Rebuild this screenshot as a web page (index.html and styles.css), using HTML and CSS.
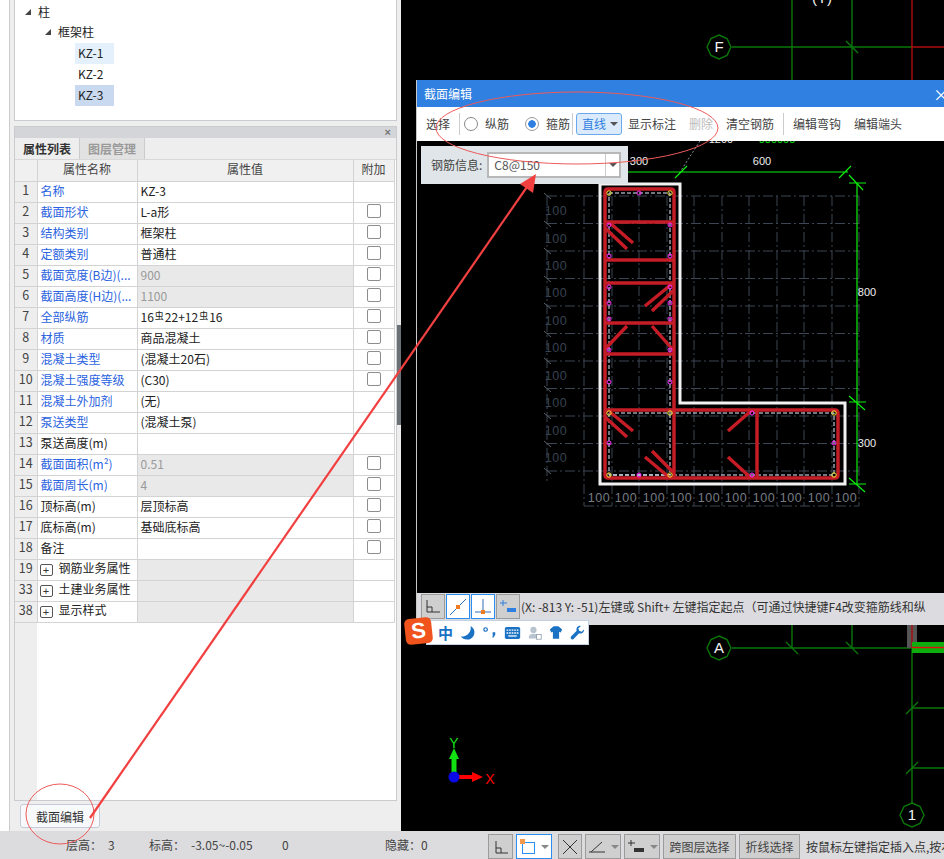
FILE: index.html
```html
<!DOCTYPE html>
<html lang="zh-CN">
<head>
<meta charset="utf-8">
<title>截面编辑</title>
<link rel="stylesheet" href="styles.css">
</head>
<body>
<div class="app">
  <div class="main">
    <aside class="side">
      <div class="tree">
        <div class="node lv1"><span class="tri"></span>柱</div>
        <div class="node lv2"><span class="tri"></span>框架柱</div>
        <div class="node lv3"><span class="leaf hover">KZ-1</span></div>
        <div class="node lv3"><span class="leaf">KZ-2</span></div>
        <div class="node lv3"><span class="leaf sel">KZ-3</span></div>
      </div>
      <section class="props">
        <div class="props-head"><span class="close">×</span></div>
        <div class="tabs"><span class="tab on">属性列表</span><span class="tab">图层管理</span></div>
        <div class="grid-wrap">
          <table class="grid">
            <colgroup><col class="c0"><col class="c1"><col class="c2"><col class="c3"></colgroup>
            <tr class="hd"><th></th><th>属性名称</th><th>属性值</th><th>附加</th></tr>
            <tr><td class="n">1</td><td class="b">名称</td><td>KZ-3</td><td></td></tr>
            <tr><td class="n">2</td><td class="b">截面形状</td><td>L-a形</td><td class="k"><i></i></td></tr>
            <tr><td class="n">3</td><td class="b">结构类别</td><td>框架柱</td><td class="k"><i></i></td></tr>
            <tr><td class="n">4</td><td class="b">定额类别</td><td>普通柱</td><td class="k"><i></i></td></tr>
            <tr><td class="n">5</td><td class="b">截面宽度(B边)(...</td><td class="g">900</td><td class="k"><i></i></td></tr>
            <tr><td class="n">6</td><td class="b">截面高度(H边)(...</td><td class="g">1100</td><td class="k"><i></i></td></tr>
            <tr><td class="n">7</td><td class="b">全部纵筋</td><td>16<sup>虫</sup>22+12<sup>虫</sup>16</td><td class="k"><i></i></td></tr>
            <tr><td class="n">8</td><td class="b">材质</td><td>商品混凝土</td><td class="k"><i></i></td></tr>
            <tr><td class="n">9</td><td class="b">混凝土类型</td><td>(混凝土20石)</td><td class="k"><i></i></td></tr>
            <tr><td class="n">10</td><td class="b">混凝土强度等级</td><td>(C30)</td><td class="k"><i></i></td></tr>
            <tr><td class="n">11</td><td class="b">混凝土外加剂</td><td>(无)</td><td></td></tr>
            <tr><td class="n">12</td><td class="b">泵送类型</td><td>(混凝土泵)</td><td></td></tr>
            <tr><td class="n">13</td><td>泵送高度(m)</td><td></td><td></td></tr>
            <tr><td class="n">14</td><td class="b">截面面积(m²)</td><td class="g">0.51</td><td class="k"><i></i></td></tr>
            <tr><td class="n">15</td><td class="b">截面周长(m)</td><td class="g">4</td><td class="k"><i></i></td></tr>
            <tr><td class="n">16</td><td>顶标高(m)</td><td>层顶标高</td><td class="k"><i></i></td></tr>
            <tr><td class="n">17</td><td>底标高(m)</td><td>基础底标高</td><td class="k"><i></i></td></tr>
            <tr><td class="n">18</td><td>备注</td><td></td><td class="k"><i></i></td></tr>
            <tr><td class="n">19</td><td><b class="plus">+</b>钢筋业务属性</td><td class="g"></td><td></td></tr>
            <tr><td class="n">33</td><td><b class="plus">+</b>土建业务属性</td><td class="g"></td><td></td></tr>
            <tr><td class="n">38</td><td><b class="plus">+</b>显示样式</td><td class="g"></td><td></td></tr>
          </table>
          <div class="gutter"></div>
        </div>
      </section>
      <div class="side-foot"><button class="edit-btn">截面编辑</button></div>
      <div class="splitter"></div>
    </aside>
    <div class="canvas">
      <svg class="cad-bg" viewBox="401 0 543 831" width="543" height="831">
        <g stroke="#0a760a" stroke-width="1.4" fill="none">
          <path d="M792 0V80M852 0V80M732 47H912"/>
          <path d="M846 41L858 53"/>
          <path d="M792 622V648M852 622V648M732 648H912M912 648V803M912 708H944M912 768H944"/>
          <path d="M786 642L798 654M846 642L858 654M906 714L918 702M906 774L918 762"/>
          <polygon points="719,35 727,38.500 731,47 727,55.500 719,59 711,55.500 707,47 711,38.500"/>
          <polygon points="719,636 727,639.500 731,648 727,656.500 719,660 711,656.500 707,648 711,639.500"/>
          <polygon points="912,803 920,806.500 924,815 920,823.500 912,827 904,823.500 900,815 904,806.500"/>
        </g>
        <path d="M912 0V80M912 47H944" stroke="#b00c0c" stroke-width="1.400" fill="none"/>
        <rect x="907" y="622" width="10" height="26" fill="#555"/>
        <path d="M912 622V648" stroke="#b00c0c" stroke-width="1.400"/>
        <rect x="912" y="642" width="32" height="11" fill="#0fae0f"/>
        <path d="M912 647.500H944" stroke="#e01010" stroke-width="1.400"/>
        <g class="cad-label">
          <text x="719" y="52">F</text>
          <text x="719" y="653">A</text>
          <text x="912" y="820">1</text>
          <text x="822" y="3">(Y)</text>
        </g>
        <path d="M454 777V758" stroke="#12e012" stroke-width="5"/>
        <path d="M454 748L449 759H459Z" fill="#12e012"/>
        <path d="M454 777H473" stroke="#f00" stroke-width="4"/>
        <path d="M483 777L472 772V782Z" fill="#f00"/>
        <circle cx="454" cy="777" r="5.500" fill="#0a0ae8"/>
        <text class="ax-y" x="454" y="748">Y</text>
        <text class="ax-x" x="490" y="784">X</text>
      </svg>
    </div>
  </div>
  <footer class="status">
    <span class="st st1">层高：&ensp;3</span>
    <span class="st st2">标高：&ensp;-3.05~-0.05</span>
    <span class="st st3">0</span>
    <span class="st st4">隐藏：0</span>
    <div class="st-tools">
      <span class="tb w26"><svg width="16" height="16" viewBox="0 0 16 16"><path d="M3 2V14H15M3 9H8V14" fill="none" stroke="#333"/></svg></span>
      <span class="tb w36 act"><svg width="16" height="16" viewBox="0 0 16 16"><rect x="2.500" y="3.500" width="12" height="11" fill="none" stroke="#2a8df0"/><rect x="0" y="0" width="5" height="5" fill="#f39a4c"/></svg><u class="caret"></u></span>
      <span class="tb w25 gap3"><svg width="18" height="18" viewBox="0 0 18 18"><path d="M2 2L16 16M16 2L2 16" stroke="#333" fill="none"/></svg></span>
      <span class="tb w36"><svg width="18" height="16" viewBox="0 0 18 16"><path d="M1 13H17M3 13L14 3" stroke="#333" fill="none"/></svg><u class="caret"></u></span>
      <span class="tb w36"><svg width="18" height="16" viewBox="0 0 18 16"><path d="M1 4H8M4 1V7" stroke="#333" fill="none"/><rect x="7" y="9" width="10" height="4" fill="#333"/></svg><u class="caret"></u></span>
      <span class="tb txt w73">跨图层选择</span>
      <span class="tb txt w61">折线选择</span>
      <span class="hint">按鼠标左键指定插入点,按右键</span>
    </div>
  </footer>

  <div class="dialog">
    <div class="dlg-title"><span>截面编辑</span><span class="dlg-x">×</span></div>
    <div class="dlg-tools">
      <span class="ti w1">选择</span><span class="sep"></span>
      <span class="radio"></span><span class="rl r1">纵筋</span>
      <span class="radio on"></span><span class="rl">箍筋</span><span class="sep"></span>
      <span class="line-btn">直线<u class="caret dark"></u></span>
      <span class="ti w2">显示标注</span>
      <span class="ti w3 off">删除</span>
      <span class="ti w4">清空钢筋</span><span class="sep s3"></span>
      <span class="ti w5">编辑弯钩</span>
      <span class="ti w5">编辑端头</span>
    </div>
    <div class="dlg-canvas">
      <svg class="cad" viewBox="416 141 528 452" width="528" height="452">
        <path class="grid-d" d="M584 196V506M612 196V506M639 196V506M667 196V506M694 196V506M722 196V506M749 196V506M777 196V506M804 196V506M832 196V506M859 196V506M547 196V484M547 196H859M547 223.500H859M547 251H859M547 278.500H859M547 306H859M547 333.500H859M547 361H859M547 388.500H859M547 416H859M547 443.500H859M547 471H859M584 506H859"/>
        <path class="grid-t" d="M544 193L551 199M544 221L551 227M544 248L551 254M544 276L551 282M544 303L551 309M544 331L551 337M544 358L551 364M544 386L551 392M544 413L551 419M544 441L551 447M544 468L551 474"/>
        <g class="dim-l">
          <text x="556" y="215">100</text><text x="556" y="243">100</text><text x="556" y="270">100</text><text x="556" y="297">100</text><text x="556" y="325">100</text><text x="556" y="352">100</text><text x="556" y="380">100</text><text x="556" y="407">100</text><text x="556" y="435">100</text><text x="556" y="462">100</text>
        </g>
        <g class="dim-b">
          <text x="599" y="502">100</text><text x="626" y="502">100</text><text x="654" y="502">100</text><text x="681" y="502">100</text><text x="709" y="502">100</text><text x="736" y="502">100</text><text x="764" y="502">100</text><text x="791" y="502">100</text><text x="819" y="502">100</text><text x="846" y="502">100</text>
        </g>
        <path d="M700 141L680 172" stroke="#8a8f98" stroke-dasharray="2 2" fill="none"/>
        <path d="M628 172H848M675 178L687 166M839 178L851 166M857 183V484M849 175L863 190M849 183H866M849 396L865 410M849 402H866M849 478L865 492M849 484H866" stroke="#0cf00c" stroke-width="1.200" fill="none"/>
        <path d="M600 184H680V403H845V484H600Z" fill="none" stroke="#f2f2f2" stroke-width="3"/>
        <path d="M609 193H670V475H609ZM609 413H834V475H609" fill="none" stroke="#e2ecff" stroke-dasharray="4 2"/>
        <g fill="none" stroke="#c61c26" stroke-width="3.400">
          <path d="M608 189H671Q674 189 674 192V410H835Q838 410 838 413V475Q838 478 835 478H608Q605 478 605 475V192Q605 189 608 189Z"/>
          <path d="M605 222H674M605 260H674M605 283H674M605 323H674M605 354H674M605 410H674M674 410V478M757 410V478"/>
          <path d="M610 223L633 243M605 228L627 249M673 283L645 306M674 290L652 311M627 326L605 349M652 326L674 351M610 412L633 431M605 417L627 437M652 451L674 473M645 457L670 478M752 410L728 431M728 457L750 477"/>
        </g>
        <g fill="none" stroke="#f5e63a">
          <circle cx="609" cy="193" r="2.200"/><circle cx="670" cy="193" r="2.200"/><circle cx="609" cy="413" r="2.200"/><circle cx="670" cy="413" r="2.200"/><circle cx="834" cy="413" r="2.200"/><circle cx="609" cy="475" r="2.200"/><circle cx="670" cy="475" r="2.200"/><circle cx="834" cy="475" r="2.200"/>
        </g>
        <g fill="none" stroke="#ff2cff">
          <circle cx="639" cy="193" r="2"/><circle cx="609" cy="225" r="2"/><circle cx="670" cy="225" r="2"/><circle cx="609" cy="256" r="2"/><circle cx="670" cy="256" r="2"/><circle cx="609" cy="287" r="2"/><circle cx="670" cy="287" r="2"/><circle cx="609" cy="303" r="2"/><circle cx="670" cy="303" r="2"/><circle cx="609" cy="319" r="2"/><circle cx="670" cy="319" r="2"/><circle cx="609" cy="350" r="2"/><circle cx="670" cy="350" r="2"/><circle cx="609" cy="382" r="2"/><circle cx="670" cy="382" r="2"/><circle cx="609" cy="443" r="2"/><circle cx="639" cy="475" r="2"/><circle cx="752" cy="413" r="2"/><circle cx="752" cy="475" r="2"/><circle cx="834" cy="443" r="2"/>
        </g>
        <g class="dim-w">
          <text x="639" y="165">300</text><text x="762" y="165">600</text><text x="867" y="296">800</text><text x="867" y="447">300</text><text x="721" y="143">1200</text>
        </g>
        <text class="dim-g" x="777" y="143">000000</text>
      </svg>
      <div class="rebar-info">
        <span>钢筋信息:</span>
        <div class="combo"><span class="combo-val">C8@150</span><span class="combo-arrow"><u class="caret dark"></u></span></div>
      </div>
    </div>
    <div class="dlg-status">
      <span class="sb"><svg width="18" height="16" viewBox="0 0 18 16"><path d="M3 1V13H16M3 8H8V13" fill="none" stroke="#333"/></svg></span>
      <span class="sb act"><svg width="20" height="20" viewBox="0 0 20 20"><path d="M2 18L18 2" stroke="#2f6fb5"/><rect x="8" y="8" width="4" height="4" fill="#f07b22"/></svg></span>
      <span class="sb act"><svg width="20" height="20" viewBox="0 0 20 20"><path d="M2 15H18M10 2V15" stroke="#2f6fb5"/><rect x="8" y="13" width="4" height="4" fill="#f07b22"/></svg></span>
      <span class="sb"><svg width="18" height="16" viewBox="0 0 18 16"><path d="M1 4H8M4 1V7" stroke="#2f80e0" fill="none"/><rect x="8" y="9" width="9" height="4" fill="#2f80e0"/></svg></span>
      <span class="sb-text">(X: -813 Y: -51)左键或 Shift+ 左键指定起点（可通过快捷键F4改变箍筋线和纵</span>
    </div>
  </div>

  <div class="ime">
    <span class="ime-logo">S</span>
    <span class="ime-zh">中</span>
    <svg width="16" height="16" viewBox="0 0 18 18"><path d="M12 1C13 7 9 13 1 13C4 18 14 18 16 10C17 6 15 3 12 1Z" fill="#1a72c4"/></svg>
    <svg width="14" height="16" viewBox="0 0 16 18"><circle cx="3" cy="5" r="2" fill="none" stroke="#1a72c4" stroke-width="1.400"/><path d="M11 8H14V11L12 14H10.500L11.500 11H11Z" fill="#1a72c4"/></svg>
    <svg width="17" height="14" viewBox="0 0 20 16"><rect x="1" y="1" width="18" height="14" rx="2" fill="#1a72c4"/><path d="M3 4.500H17M3 8H17" stroke="#fff" stroke-width="1.500" stroke-dasharray="2 1"/><path d="M5 11.500H15" stroke="#fff" stroke-width="1.500"/></svg>
    <svg width="14" height="16" viewBox="0 0 18 18"><circle cx="7" cy="5" r="4" fill="#b7c3cf"/><path d="M1 16C1 11 4 10 7 10C10 10 13 11 13 16Z" fill="#b7c3cf"/><rect x="11" y="11" width="6" height="6" fill="#fff" stroke="#8b99a6"/></svg>
    <svg width="14" height="15" viewBox="0 0 18 18"><path d="M6 1H12L17 5L15 9L13 8V17H5V8L3 9L1 5Z" fill="#1a72c4"/></svg>
    <svg width="15" height="15" viewBox="0 0 18 18"><path d="M12 1C9 1 7 4 8 7L1 14C0 16 2 18 4 17L11 10C14 11 17 9 17 5L14 8L11 7L10 4L13 1.500Z" fill="#1a72c4"/></svg>
  </div>

  <svg class="notes" viewBox="0 0 944 859" width="944" height="859">
    <ellipse cx="577" cy="128" rx="141" ry="36" fill="none" stroke="#ee5a5a"/>
    <ellipse cx="60" cy="814" rx="34" ry="30" fill="none" stroke="#ee5a5a"/>
    <path d="M90 818L529 184" stroke="#f24040" stroke-width="2.200" fill="none"/>
    <path d="M536 174L520 184L533 193Z" fill="#f24040"/>
  </svg>
</div>
</body>
</html>
```

FILE: styles.css
```css
* { box-sizing: border-box; }
html, body { margin: 0; padding: 0; }
body { width: 944px; height: 859px; overflow: hidden; background: #000; font: 12px/1 "Noto Sans CJK SC", "Noto Sans", sans-serif; color: #222; }
u { text-decoration: none; }

.app { position: relative; width: 944px; height: 859px; display: flex; flex-direction: column; overflow: hidden; }
.main { flex: 1; display: flex; min-height: 0; }

.side { position: relative; width: 401px; background: #eee; border-left: 9px solid #fff; padding-left: 5px; padding-right: 4px; display: flex; flex-direction: column; box-shadow: inset 1px 0 0 #ccc; }
.tree { height: 122px; background: #fff; border: 1px solid #c9cbce; margin-top: -1px; padding-top: 2px; flex: none; }
.node { height: 21px; display: flex; align-items: center; }
.lv1 { padding-left: 10px; height: 20px; }
.lv2 { padding-left: 30px; padding-bottom: 2px; }
.lv3 { padding-left: 60px; }
.tri { width: 0; height: 0; border-style: solid; border-width: 0 0 6px 6px; border-color: transparent transparent #444 transparent; margin-right: 7px; }
.leaf { width: 39px; height: 21px; display: flex; align-items: center; padding: 0 0 2px 3px; }
.leaf.hover { background: #e4f1fd; }
.leaf.sel { background: #c9d9ef; }

.props { margin-top: 5px; height: 675px; border: 1px solid #c9cbce; background: #fff; display: flex; flex-direction: column; flex: none; }
.props-head { height: 11px; background: #d3d5d9; display: flex; justify-content: flex-end; align-items: center; padding-right: 5px; }
.close { color: #777; font: bold 11px/11px "Liberation Sans", sans-serif; }
.tabs { height: 22px; background: #eee; display: flex; border-bottom: 1px solid #d8d8d8; }
.tab { width: 65px; display: flex; align-items: center; justify-content: center; color: #9a9a9a; font-weight: 700; background: #e2e2e2; border-right: 1px solid #c9cbce; }
.tab.on { color: #333; background: #eee; }

.grid-wrap { flex: 1; display: flex; flex-direction: column; min-height: 0; }
.grid { border-collapse: collapse; table-layout: fixed; width: 379px; flex: none; }
.c0 { width: 22px; } .c1 { width: 100px; } .c2 { width: 216px; } .c3 { width: 41px; }
.grid th, .grid td { height: 21px; padding: 0 0 2px 3px; border: 1px solid #d3d3d3; border-top: 0; border-left: 0; font-weight: 400; white-space: nowrap; overflow: hidden; color: #222; }
.grid th { background: #f0f0f0; text-align: center; color: #444; padding: 0 0 2px; }
.grid td.n { background: #eee; text-align: center; color: #444; padding: 0 0 2px; font-size: 12.500px; }
.grid td.b { color: #2b63e0; }
.grid td.g { background: #e9e9e9; color: #9a9a9a; }
.grid td.k { padding: 0 0 2px; text-align: center; }
.k i { display: inline-block; width: 14px; height: 14px; border: 1px solid #8d8d8d; border-radius: 2px; background: #fff; vertical-align: middle; margin-top: -3px; }
.grid sup { font-size: 9px; line-height: 1; vertical-align: 3px; margin: 0 1px; }
.plus { display: inline-flex; width: 13px; height: 12px; border: 1px solid #555; border-radius: 2px; align-items: center; justify-content: center; font: 400 11px/10px "Liberation Sans", sans-serif; color: #333; margin: 0 6px 0 -1px; vertical-align: -1px; }
.gutter { flex: 1; width: 22px; background: #eee; }

.side-foot { flex: 1; padding: 3px 0 0 6px; }
.edit-btn { display: block; width: 80px; height: 24px; background: #f8f9fb; border: 1px solid #c5cbdb; border-radius: 3px; font: 12px "Noto Sans CJK SC", sans-serif; color: #333; padding: 0; }
.splitter { position: absolute; right: 0; top: 325px; width: 4px; height: 100px; background: #6b7177; }

.canvas { position: relative; flex: 1; background: #000; overflow: hidden; }
.cad-bg { display: block; }
.cad-label text { fill: #f2f2f2; font: 15px "Liberation Sans", sans-serif; text-anchor: middle; }
.ax-y { fill: #12e012; font: 14px "Liberation Sans", sans-serif; text-anchor: middle; }
.ax-x { fill: #f00; font: 14px "Liberation Sans", sans-serif; text-anchor: middle; }

.status { height: 28px; background: #dcdcdf; position: relative; flex: none; }
.st { position: absolute; top: 8px; color: #444; white-space: nowrap; }
.st1 { left: 66px; } .st2 { left: 149px; } .st3 { left: 282px; } .st4 { left: 385px; }
.st-tools { position: absolute; left: 488px; top: 3px; display: flex; gap: 3px; align-items: stretch; height: 25px; white-space: nowrap; }
.tb { display: flex; align-items: center; justify-content: center; gap: 5px; background: #cfcfcf; border: 1px solid #9b9b9b; height: 25px; color: #444; flex: none; }
.tb.act { background: #fff; border: 1px solid #2a8df0; }
.w26 { width: 25px; } .w36 { width: 36px; } .w25 { width: 24px; }
.gap3 { margin-left: 3px; }
.w73 { width: 73px; } .w61 { width: 61px; }
.hint { margin-left: 3px; color: #333; line-height: 25px; }
.caret { display: inline-block; width: 0; height: 0; border: 4px solid transparent; border-top-color: #888; border-bottom: 0; }
.caret.dark { border-top-color: #555; }

.dialog { position: absolute; left: 416px; top: 80px; width: 528px; height: 545px; background: #dcdce0; display: flex; flex-direction: column; border-left: 1px solid #c8c8c8; }
.dlg-title { height: 27px; background: #2f80e0; color: #fff; display: flex; justify-content: space-between; align-items: center; padding-left: 7px; flex: none; }
.dlg-x { font-size: 16px; margin-right: -5px; }
.dlg-tools { height: 34px; background: #fff; display: flex; align-items: center; padding-left: 2px; flex: none; white-space: nowrap; color: #444; }
.ti { display: flex; align-items: center; justify-content: center; height: 22px; flex: none; }
.w1 { width: 38px; }
.w2 { width: 54px; margin-left: 3px; }
.w3 { width: 34px; margin-left: 5px; }
.w4 { width: 58px; margin-left: 3px; margin-right: 2px; }
.w5 { width: 58px; margin-right: 3px; }
.off { color: #bbb; }
.sep { width: 1px; height: 22px; background: #ccc; margin: 0 3px 0 2px; flex: none; }
.sep.s3 { margin-right: 4px; }
.radio { width: 14px; height: 14px; border: 1px solid #888; border-radius: 50%; margin: 0 7px 0 1px; background: #fff; flex: none; }
.radio.on { border-color: #999; background: radial-gradient(circle, #2f80e0 0 3.500px, #fff 4px); }
.rl { width: 24px; flex: none; }
.r1 { margin-right: 15px; }
.line-btn { width: 46px; height: 22px; background: #dcebfc; color: #2f80e0; border: 1px solid #6aa9ee; border-radius: 3px; display: flex; align-items: center; justify-content: space-between; padding: 0 3px 0 5px; flex: none; }
.dlg-canvas { position: relative; height: 452px; background: #000; overflow: hidden; flex: none; }
.cad { display: block; margin-left: -1px; }
.grid-d { fill: none; stroke: #3d4654; stroke-dasharray: 10 3 2 3; }
.grid-t { fill: none; stroke: #59606a; }
.dim-l text { fill: #384250; font: 12.500px "Liberation Sans", sans-serif; text-anchor: middle; letter-spacing: .5px; }
.dim-b text { fill: #777c85; font: 12.500px "Liberation Sans", sans-serif; text-anchor: middle; letter-spacing: .5px; }
.dim-w text { fill: #eee; font: 11px "Liberation Sans", sans-serif; text-anchor: middle; }
.dim-g { fill: #0cf00c; font: 11px "Liberation Sans", sans-serif; text-anchor: middle; }
.rebar-info { position: absolute; left: 4px; top: 5px; width: 207px; height: 38px; background: #dfe5e8; display: flex; align-items: center; gap: 5px; padding-left: 10px; color: #444; white-space: nowrap; }
.combo { width: 134px; height: 26px; background: #fff; border: 2px solid #b8b8b8; display: flex; align-items: stretch; flex: none; }
.combo-val { flex: 1; padding-left: 5px; line-height: 22px; color: #555; }
.combo-arrow { width: 14px; border-left: 1px solid #ccc; display: flex; align-items: center; justify-content: center; }
.dlg-status { flex: 1; display: flex; align-items: center; gap: 1px; padding: 0 0 5px 4px; white-space: nowrap; overflow: hidden; color: #333; }
.sb { width: 24px; height: 25px; background: #cfcfcf; border: 1px solid #9b9b9b; display: flex; align-items: center; justify-content: center; flex: none; }
.sb.act { background: #fff; border: 1px solid #2a8df0; }
.sb-text { margin-left: 0; }

.ime { position: absolute; left: 426px; top: 620px; width: 163px; height: 25px; background: #fff; border: 1px solid #c3d2e2; display: flex; align-items: center; gap: 7px; padding-left: 11px; }
.ime-logo { position: absolute; left: -22px; top: -3px; width: 27px; height: 26px; background: #f0531c; border-radius: 5px; color: #fff; font: bold 22px/26px "Liberation Sans", sans-serif; text-align: center; transform: rotate(-6deg); }
.ime-zh { color: #1a72c4; font-size: 15px; font-weight: 700; }
.notes { position: absolute; left: 0; top: 0; pointer-events: none; }
```
